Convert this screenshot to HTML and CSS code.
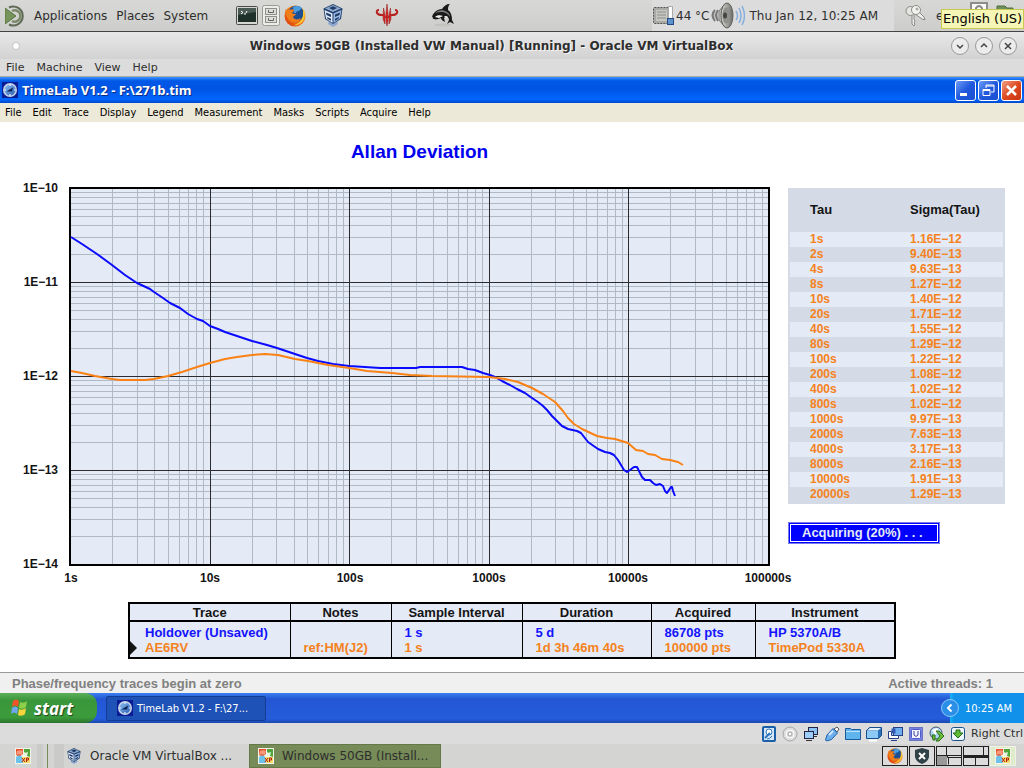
FILE: index.html
```html
<!DOCTYPE html>
<html lang="en">
<head>
    <meta charset="UTF-8">
    <meta name="viewport" content="width=device-width, initial-scale=1.0">
    <title>TimeLab V1.2</title>
    <link rel="stylesheet" href="styles.css">
</head>
<body>
    <!-- shared icons -->
    <svg class="defs" width="0" height="0" aria-hidden="true">
        <linearGradient id="xp-blue" x1="0" y1="0" x2="1" y2="1">
            <stop offset="0" stop-color="#8fc0f4"/><stop offset="1" stop-color="#2a5eb4"/>
        </linearGradient>
        <linearGradient id="fox-fire" x1="0" y1="1" x2="1" y2="0">
            <stop offset="0" stop-color="#d9380c"/><stop offset="0.6" stop-color="#f0801a"/><stop offset="1" stop-color="#fcd040"/>
        </linearGradient>
        <linearGradient id="metal" x1="0" y1="0" x2="1" y2="0">
            <stop offset="0" stop-color="#d8d8d4"/><stop offset="1" stop-color="#6c6c68"/>
        </linearGradient>
        <symbol id="i-firefox" viewBox="0 0 22 22">
            <circle cx="11" cy="11" r="10.5" fill="url(#fox-fire)"/>
            <circle cx="12" cy="8.5" r="7.8" fill="#1d4f94"/>
            <path d="M9 2c3-2 7-1 9 1-2 1-2 3-4 3s-1 3-4 2z" fill="#4c9ce0"/>
            <path d="M1.500 4c1 1 2 1 4 1 2-1 3-1 5 0L8 8c1 1 3 1 4 1-1 2-3 2-3 3 1 3 5 3 8 1-2 5-9 6-12 2C2 12 1 8 1.500 4z" fill="#ef7d18"/>
            <path d="M19 4c2 3 2 7 1 10-2 5-7 7-10 6 5-1 9-6 9-10z" fill="#fac837"/>
        </symbol>
        <symbol id="i-vbox" viewBox="0 0 20 23">
            <path d="M6 17h8l1 3-5 3-5-3z" fill="#8fa8cf"/>
            <path d="M10 0l9.500 4.500L18 15l-8 5L2 15 .5 4.500z" fill="#21406e"/>
            <path d="M10 1l8 3.500L10 8 2 4.500z" fill="#8fa9cc"/>
            <path d="M1.500 6L9.500 9.500V19L3 14.500z" fill="#dfe9f7"/>
            <path d="M18.500 6l-8 3.500V19l6.500-4.500z" fill="#9cb8e0"/>
            <path d="M3 8.500l5 2v2.500L3.500 11zM4 13l4 1.800v2L4.500 14.800zM17 8.500l-5 2v2.500l4.500-2zM16 13l-4 1.800v2l3.500-2zM6 4l4-1.800L14 4l-4 2z" fill="#1e3b68"/>
        </symbol>
        <symbol id="i-clock" viewBox="0 0 16 16">
            <rect width="16" height="16" fill="#0a1c94"/>
            <circle cx="8" cy="8" r="7" fill="#c7d5e6"/>
            <circle cx="8" cy="8" r="5.500" fill="url(#xp-blue)"/>
            <path d="M4.500 9.500l6.500-4-1 4z" fill="#0c2350"/>
            <path d="M8 2v2M2.500 8h1.500M12 8h1.500M8 12v2" stroke="#fff"/>
        </symbol>
        <symbol id="i-xp" viewBox="0 0 16 16">
            <rect width="16" height="16" fill="#f4f4ea"/>
            <path d="M1 1h7v5c-2 2-2 1-3 3L1 7z" fill="#e8502a"/>
            <path d="M2 3c2-1 4-1 6 0l-1 4c-2-1-4-1-6 0z" fill="#f59a7c"/>
            <path d="M9 1h6v8l-6-2z" fill="#4fa53a"/>
            <path d="M9 4c1 1 2 1 4 0l-1 4H9z" fill="#e9f6e0"/>
            <path d="M1 9c2-2 5-2 6 0l1 6H1z" fill="#6cc2ea"/>
            <path d="M7 9h8v6H8z" fill="#f6da6a"/>
            <path d="M7 10l3 4M10 10l-3 4M11.500 14v-4h2v2h-2" stroke="#b02010" fill="none"/>
        </symbol>
    </svg>

    <header class="panel panel-top">
        <nav class="panel-menu" aria-label="Desktop">
            <svg class="mate" width="20" height="22" viewBox="0 0 20 22" aria-hidden="true">
                <path d="M0 3l11 8L0 19z" fill="#76935a" stroke="#5a7542"/>
                <path d="M4 2.500A9.500 9.500 0 1 1 4 19.500" fill="none" stroke="#5f6a55" stroke-width="2"/>
                <path d="M7 6a5.700 5.700 0 1 1 0 10" fill="none" stroke="#7a8a6a" stroke-width="2.500"/>
            </svg>
            <a href="#">Applications</a>
            <a href="#">Places</a>
            <a href="#">System</a>
        </nav>
        <div class="launchers">
            <button type="button" aria-label="Terminal"><svg width="22" height="20" viewBox="0 0 22 20">
                <rect x=".5" y=".5" width="21" height="18" rx="1" fill="#d6d6d2" stroke="#4a4a48"/>
                <rect x="2" y="2" width="18" height="14" fill="#20302b"/>
                <path d="M2 9l18-3V2H2z" fill="#4a5a54"/>
                <path d="M5 5l2 1.500L5 8M8 8h2M11 5l-1 2" stroke="#fff" fill="none"/>
            </svg></button>
            <button type="button" aria-label="Files"><svg width="18" height="21" viewBox="0 0 18 21">
                <rect x=".5" y=".5" width="17" height="20" rx="2" fill="#ecece8" stroke="#9a9a96"/>
                <rect x="3.500" y="3.500" width="11" height="6" fill="#dcdcd8" stroke="#8f8f8b"/>
                <rect x="3.500" y="11.500" width="11" height="6" fill="#dcdcd8" stroke="#8f8f8b"/>
                <path d="M6.500 5v2.500h5V5M6.500 13v2.500h5V13" fill="none" stroke="#666"/>
            </svg></button>
            <button type="button" aria-label="Firefox"><svg width="22" height="22"><use href="#i-firefox"/></svg></button>
        </div>
        <div class="launchers launchers-wide">
            <button type="button" aria-label="VirtualBox"><svg width="20" height="23"><use href="#i-vbox"/></svg></button>
            <button type="button" aria-label="Quake"><svg width="24" height="23" viewBox="0 0 24 23">
                <path d="M4 6Q1 6 2 9q1 2 5 2 3 0 3 3M20 6q3 0 2 3-1 2-5 2-3 0-3 3" fill="none" stroke="#b82020" stroke-width="2"/>
                <path d="M12 0l1 9v8l-1 5-1-5V9zM8.500 4L10 11v9l-2-5zM15.500 4L14 11v9l2-5z" fill="#e02c2c" stroke="#8e1414" stroke-width=".5"/>
            </svg></button>
            <button type="button" aria-label="Dolphin"><svg width="24" height="23" viewBox="0 0 24 23">
                <ellipse cx="12" cy="21" rx="9" ry="1.500" fill="#c2c2be"/>
                <path d="M1 13C2 9 6 5 11 5c2-3 4-5 8-5-2 2-2 4-2 6 3 2 4 6 4 10l2 4-4-2-3 2 2-4c0-2-1-3-3-4l-2 2 1 4c-3-1-4-3-4-4-3 1-5 2-7 1-1 0-2-1-1-2z" fill="#1a1a1a"/>
                <path d="M4 13c2-2 5-2 8-1l-4 2z" fill="#f2f2f2"/>
                <path d="M13 12l3 0 1 2-2 0z" fill="#e2e2e2"/>
                <path d="M4 9c3-3 8-4 12-1 2 1 3 3 3 5-3-5-8-6-15-4z" fill="#7d7d7d"/>
            </svg></button>
        </div>
        <div class="applets">
            <svg width="22" height="20" viewBox="0 0 22 20" aria-hidden="true">
                <rect x="1.500" y="1.500" width="17" height="16" rx="1" fill="#a9a9a5" stroke="#545450" stroke-dasharray="2 1"/>
                <rect x="4" y="4" width="11" height="11" fill="#c6c6c2"/>
                <path d="M5 6h9M5 9h9M5 12h9" stroke="#8c8c88"/>
                <rect x="16.500" y=".5" width="4" height="13" fill="#fff" stroke="#aaa"/>
                <rect x="15.500" y="12.500" width="6" height="6" fill="#5c93cf" stroke="#234a84"/>
            </svg>
            <span>44 °C</span>
            <svg class="speaker" width="34" height="27" viewBox="0 0 34 27" aria-hidden="true">
                <path d="M4 8q-5 5 0 11M7 8q-4 5 0 11" fill="#bbb" stroke="#777" stroke-width="2"/>
                <path d="M8 9l6-7v23l-6-7z" fill="url(#metal)" stroke="#777"/>
                <ellipse cx="16" cy="13.500" rx="6" ry="12.500" fill="url(#metal)" stroke="#5f5f5b"/>
                <ellipse cx="15" cy="13.500" rx="3.500" ry="8" fill="#8f8f8b"/>
                <ellipse cx="14" cy="13.500" rx="2" ry="3" fill="#454541"/>
                <path d="M25 9q3 5 0 9M28 6q4 8 0 15M31 4q5 10 0 19" fill="none" stroke="#86aede" stroke-width="1.500"/>
            </svg>
            <time>Thu Jan 12, 10:25 AM</time>
        </div>
        <div class="indicators">
            <svg width="24" height="22" viewBox="0 0 24 22" aria-hidden="true">
                <path d="M8 9v10l2 2 1-2-1-1 1-2-1-2V9" fill="#eee" stroke="#8a8a86"/>
                <path d="M11 9l7 5 3 1-1-3-5-5" fill="#eee" stroke="#8a8a86"/>
                <circle cx="6.500" cy="6" r="4.500" fill="#e4e4e0" stroke="#8a8a86"/>
                <circle cx="12" cy="5" r="4.500" fill="#f2f2ee" stroke="#8a8a86"/>
                <circle cx="13" cy="4" r="1.500" fill="#aaa"/>
            </svg>
            <span class="lang">e</span>
            <svg width="18" height="28" viewBox="0 0 18 28" aria-hidden="true">
                <rect x="1" y="1" width="16" height="22" fill="#fafafa" stroke="#8d8d89" stroke-width="2"/>
                <path d="M6 10V6q3-4 6 0v4" fill="none" stroke="#888" stroke-width="2"/>
            </svg>
            <svg width="18" height="22" viewBox="0 0 18 22" aria-hidden="true">
                <path d="M1 19V1h8l2 2h6v16z" fill="#6f8f5e" stroke="#4f6c40"/>
            </svg>
            <div class="tooltip" role="tooltip">English (US)</div>
        </div>
    </header>

    <div class="vm-title">
        <i class="dot"></i>
        <h2>Windows 50GB (Installed VW Manual) [Running] - Oracle VM VirtualBox</h2>
        <div class="vm-buttons">
            <button type="button" aria-label="Minimize"><svg width="8" height="8" viewBox="0 0 8 8"><path d="M1 3l3 3 3-3"/></svg></button>
            <button type="button" aria-label="Maximize"><svg width="8" height="8" viewBox="0 0 8 8"><path d="M1 5l3-3 3 3"/></svg></button>
            <button type="button" aria-label="Close"><svg width="8" height="8" viewBox="0 0 8 8"><path d="M1 1l6 6M7 1L1 7"/></svg></button>
        </div>
    </div>
    <nav class="vm-menu" aria-label="Machine">
        <a href="#">File</a><a href="#">Machine</a><a href="#">View</a><a href="#">Help</a>
    </nav>

    <div class="xp-title">
        <svg width="16" height="16" aria-hidden="true"><use href="#i-clock"/></svg>
        <h2>TimeLab V1.2 - F:\271b.tim</h2>
        <div class="xp-buttons">
            <button type="button" aria-label="Minimize"><svg width="17" height="17" viewBox="0 0 17 17"><path d="M3 11h7v3H3z" fill="#fff"/></svg></button>
            <button type="button" aria-label="Restore"><svg width="17" height="17" viewBox="0 0 17 17"><path d="M6 6V3h8v7h-3M6 4h8M3 7.500h7v6H3zM3 8.500h7" fill="none" stroke="#fff"/></svg></button>
            <button type="button" class="close" aria-label="Close"><svg width="17" height="17" viewBox="0 0 17 17"><path d="M4 4l9 9M13 4l-9 9" stroke="#fff" stroke-width="2.500"/></svg></button>
        </div>
    </div>
    <nav class="xp-menu" aria-label="TimeLab">
        <a href="#">File</a><a href="#">Edit</a><a href="#">Trace</a><a href="#">Display</a><a href="#">Legend</a><a href="#">Measurement</a><a href="#">Masks</a><a href="#">Scripts</a><a href="#">Acquire</a><a href="#">Help</a>
    </nav>

    <main>
        <div class="workspace">
            <section class="chart">
                <h1>Allan Deviation</h1>
                <svg id="plot" viewBox="0 180 788 410" role="img" aria-label="Allan deviation against tau">
                    <rect x="70" y="188" width="699" height="377" fill="#e4eaf6"/>
                    <g id="grid" shape-rendering="crispEdges"></g>
                    <rect x="70" y="188" width="699" height="377" fill="none" stroke="#000" stroke-width="2"/>
                    <polyline class="trace blue-line" points="71,237 82,244 97,254 112,265 125,275 137,283 150,289 154,292 163,298 170,303 180,308 188,314 197,319 203,321 210,326 218,329 225,332 237,336 252,341 267,345 277,348 295,354 307,358 318,361 333,364 349,366 365,367 380,368 416,368 420,367 462,367 468,369 475,370 483,373 490,375 495,377 502,381 510,385 517,389 525,393 532,398 538,402 543,406 547,410 552,416 562,426 568,429 577,431 581,433 588,442 598,449 605,452 610,453 614,455 618,460 624,470 627,472 630,470 634,467 637,467 639,471 642,477 645,480 650,480 653,483 656,485 660,484 663,486 665,491 667,493 669,490 671,487 672,487 673,491 675,496"/>
                    <polyline class="trace orange-line" points="71,371 82,373 95,376 112,379 120,380 145,380 154,379 168,376 182,372 197,367 210,363 225,359 237,357 252,355 265,354 278,355 295,359 308,361 328,365 349,368 367,371 392,373 410,375 432,376 489,377 505,379 518,382 532,388 543,394 555,402 563,411 568,418 574,424 582,429 597,436 607,438 615,439 628,443 636,450 643,451 648,454 655,455 662,459 670,460 678,462 683,465"/>
                    <g class="axis-y">
                        <text x="58" y="192">1E−10</text>
                        <text x="58" y="286">1E−11</text>
                        <text x="58" y="380">1E−12</text>
                        <text x="58" y="474">1E−13</text>
                        <text x="58" y="568">1E−14</text>
                    </g>
                    <g class="axis-x">
                        <text x="71" y="582">1s</text>
                        <text x="210" y="582">10s</text>
                        <text x="350" y="582">100s</text>
                        <text x="489" y="582">1000s</text>
                        <text x="628" y="582">10000s</text>
                        <text x="768" y="582">100000s</text>
                    </g>
                </svg>
            </section>

            <aside class="results">
                <table class="sigma">
                    <thead><tr><th scope="col">Tau</th><th scope="col">Sigma(Tau)</th></tr></thead>
                    <tbody>
                        <tr><td>1s</td><td>1.16E−12</td></tr>
                        <tr><td>2s</td><td>9.40E−13</td></tr>
                        <tr><td>4s</td><td>9.63E−13</td></tr>
                        <tr><td>8s</td><td>1.27E−12</td></tr>
                        <tr><td>10s</td><td>1.40E−12</td></tr>
                        <tr><td>20s</td><td>1.71E−12</td></tr>
                        <tr><td>40s</td><td>1.55E−12</td></tr>
                        <tr><td>80s</td><td>1.29E−12</td></tr>
                        <tr><td>100s</td><td>1.22E−12</td></tr>
                        <tr><td>200s</td><td>1.08E−12</td></tr>
                        <tr><td>400s</td><td>1.02E−12</td></tr>
                        <tr><td>800s</td><td>1.02E−12</td></tr>
                        <tr><td>1000s</td><td>9.97E−13</td></tr>
                        <tr><td>2000s</td><td>7.63E−13</td></tr>
                        <tr><td>4000s</td><td>3.17E−13</td></tr>
                        <tr><td>8000s</td><td>2.16E−13</td></tr>
                        <tr><td>10000s</td><td>1.91E−13</td></tr>
                        <tr><td>20000s</td><td>1.29E−13</td></tr>
                    </tbody>
                </table>
                <div class="acquiring" role="status">Acquiring (20%) . . .</div>
            </aside>
        </div>

        <table class="traces">
            <colgroup><col class="c-trace"><col class="c-notes"><col class="c-interval"><col class="c-duration"><col class="c-acquired"><col></colgroup>
            <thead>
                <tr><th scope="col">Trace</th><th scope="col">Notes</th><th scope="col">Sample Interval</th><th scope="col">Duration</th><th scope="col">Acquired</th><th scope="col">Instrument</th></tr>
            </thead>
            <tbody>
                <tr class="blue"><td>Holdover (Unsaved)</td><td></td><td>1 s</td><td>5 d</td><td>86708 pts</td><td>HP 5370A/B</td></tr>
                <tr class="orange selected"><td>AE6RV</td><td>ref:HM(J2)</td><td>1 s</td><td>1d 3h 46m 40s</td><td>100000 pts</td><td>TimePod 5330A</td></tr>
            </tbody>
        </table>
    </main>

    <div class="statusbar">
        <span>Phase/frequency traces begin at zero</span>
        <span>Active threads: 1</span>
    </div>

    <div class="taskbar">
        <button type="button" class="start">
            <svg width="20" height="18" viewBox="0 0 20 18" aria-hidden="true">
                <path d="M3 2c2-2 4-2 6 0L8 8C6 6 4 6 2 8z" fill="#f0552a"/>
                <path d="M10 3c2 1 5 1 7-1l-1 6c-2 2-5 2-7 1z" fill="#8fd04a"/>
                <path d="M2 9c2-2 4-2 6 0l-1 6c-2-2-4-2-6 0z" fill="#6ea6f4"/>
                <path d="M9 10c2 1 4 1 7-1l-1 6c-2 2-5 2-7 1z" fill="#fcd53c"/>
            </svg>
            start
        </button>
        <button type="button" class="task">
            <svg width="16" height="16" aria-hidden="true"><use href="#i-clock"/></svg>
            TimeLab V1.2 - F:\27...
        </button>
        <div class="tray">
            <button type="button" aria-label="Show hidden icons"><svg width="18" height="18" viewBox="0 0 18 18">
                <circle cx="9" cy="9" r="8.500" fill="#2b8fe8" stroke="#8ccbf8"/>
                <path d="M10.500 5.500L7 9l3.500 3.500" fill="none" stroke="#fff" stroke-width="2"/>
            </svg></button>
            <time>10:25 AM</time>
        </div>
    </div>

    <div class="vm-status">
        <svg width="16" height="16" viewBox="0 0 16 16" aria-hidden="true"><rect x="2" y="1" width="12" height="14" rx="1" fill="#d5e8fa" stroke="#1b5fa8" stroke-width="2"/><circle cx="8" cy="6" r="3" fill="#fff" stroke="#2d74bd"/><path d="M4 12l5-5" stroke="#2d74bd" stroke-width="2"/><path d="M6 13q3 0 5-3" stroke="#2d74bd" fill="none"/></svg>
        <svg width="16" height="16" viewBox="0 0 16 16" aria-hidden="true"><circle cx="8" cy="8" r="7" fill="#dedede" stroke="#a6a6a6"/><circle cx="8" cy="8" r="4" fill="none" stroke="#fff"/><circle cx="8" cy="8" r="2" fill="#fff" stroke="#a0a0a0"/></svg>
        <svg width="16" height="16" viewBox="0 0 16 16" aria-hidden="true"><rect x="5.500" y="1.500" width="9" height="7" fill="#8dc3f2" stroke="#224"/><path d="M9 10.500h5" stroke="#333"/><rect x="1.500" y="5.500" width="9" height="7" fill="#9dcdf6" stroke="#224"/><path d="M3 14.500h6" stroke="#333"/></svg>
        <svg width="16" height="16" viewBox="0 0 16 16" aria-hidden="true"><path d="M10 3l3-2 2 2-2 3z" fill="#f5f5f5" stroke="#555"/><path d="M9 2.500l4.500 4.500-6 6.500-5 1.500-1-1L3 9z" fill="#6db0ef" stroke="#1b5fa8"/><path d="M5 9l4-4" stroke="#d5ebff" stroke-width="2"/></svg>
        <svg width="16" height="16" viewBox="0 0 16 16" aria-hidden="true"><path d="M.5 13.500v-11h5l1 1h9v10z" fill="#5fb4ee" stroke="#185a9c"/><path d="M1 5.500h14" stroke="#bfe2fa"/></svg>
        <svg width="16" height="16" viewBox="0 0 16 16" aria-hidden="true"><path d="M.5 4.500l3-3h12v8l-3 3H.5z" fill="#2d70ba" stroke="#174e8a"/><path d="M1 4.500l3-2.500h11l-3 2.500z" fill="#e6f2fc"/><rect x="1" y="5" width="11" height="7" fill="#8dc9f7"/><path d="M3 14.500h8" stroke="#fff" stroke-width="2"/></svg>
        <svg width="16" height="16" viewBox="0 0 16 16" aria-hidden="true"><rect x="6.500" y="1.500" width="9" height="8" fill="#6eaef0" stroke="#253e88"/><path d="M1.500 5.500h3v4h7v3h-10zM4 14.500h6" fill="#fff" stroke="#253e88"/><rect x="4.500" y="2.500" width="4" height="5" fill="#345ab0"/></svg>
        <svg width="16" height="16" viewBox="0 0 16 16" aria-hidden="true"><rect x="1.500" y="1.500" width="13" height="13" fill="#7582e0" stroke="#2b35a8" stroke-dasharray="1 1"/><rect x="3.500" y="3.500" width="9" height="9" rx="1" fill="#f3f4ff" stroke="#4d58c4"/><path d="M6 5v4q2 3 4 0V5" fill="none" stroke="#39409c"/></svg>
        <svg width="16" height="16" viewBox="0 0 16 16" aria-hidden="true"><circle cx="7" cy="7" r="6" fill="#a9d4f4" stroke="#456"/><path d="M3 4l5-2 2 3-4 4z" fill="#fff"/><path d="M7 5h3l5 5-5 5H7l4-5z" fill="#6cbf3c" stroke="#2b6d1b"/><path d="M3 9h3v5H4z" fill="#6cbf3c" stroke="#2b6d1b"/></svg>
        <svg width="16" height="16" viewBox="0 0 16 16" aria-hidden="true"><rect x="1.500" y="1.500" width="13" height="13" rx="2" fill="#eef6ff" stroke="#1d4f86"/><path d="M6 4h4v3h3l-5 5-5-5h3z" fill="#62bb35" stroke="#256c16"/></svg>
        <span>Right Ctrl</span>
    </div>

    <footer class="panel panel-bottom">
        <button type="button" class="show-desktop" aria-label="Windows XP"><svg width="16" height="16"><use href="#i-xp"/></svg></button>
        <i class="handle"></i>
        <button type="button" class="window-task"><svg width="16" height="16"><use href="#i-vbox"/></svg>Oracle VM VirtualBox ...</button>
        <button type="button" class="window-task active"><svg width="16" height="16"><use href="#i-xp"/></svg>Windows 50GB (Install...</button>
        <div class="pager">
            <button type="button" aria-label="Workspace 1"><svg width="16" height="16"><use href="#i-firefox"/></svg></button>
            <button type="button" aria-label="Workspace 2"><svg width="16" height="16" viewBox="0 0 16 16"><path d="M1 2l7-2 7 2v7q-1 5-7 7-6-2-7-7z" fill="#2f4247"/><path d="M5 5l6 6M11 5l-6 6" stroke="#fff" stroke-width="2"/></svg></button>
            <button type="button" aria-label="Workspace 3"><svg width="24" height="18" viewBox="0 0 24 18"><path d="M0 9h10v9H0z" fill="#999"/><path d="M0 8.500h24M9.500 0v8M10.500 8v2.500H24M11.500 17.500V11" fill="none" stroke="#222"/></svg></button>
            <button type="button" aria-label="Workspace 4"><svg width="24" height="18" viewBox="0 0 24 18"><path d="M0 9h24" stroke="#222" stroke-width="2"/><path d="M19.500 0v8M11.500 9v9M0 10.500h11M11 10.500h13" fill="none" stroke="#222"/></svg></button>
            <button type="button" class="current" aria-label="Workspace 5"><svg width="16" height="16"><use href="#i-xp"/></svg></button>
        </div>
    </footer>

    <script src="script.js"></script>
</body>
</html>
```
FILE: styles.css
```css
* {
    box-sizing: border-box;
}
body {
    margin: 0;
    min-height: 100vh;
    display: flex;
    flex-direction: column;
    background-color: #fff;
    font-family: "DejaVu Sans", sans-serif;
    font-size: 12px;
    color: #2e2e2e;
}
a {
    color: inherit;
    text-decoration: none;
}
button {
    padding: 0;
    border: none;
    background: none;
    font: inherit;
    color: inherit;
    cursor: pointer;
}
svg {
    display: block;
    flex: none;
}
h1, h2 {
    margin: 0;
}
.defs {
    position: absolute;
}

/* desktop panels */
.panel {
    display: flex;
    align-items: center;
    background: linear-gradient(#d8d9d6, #cdcecb);
}
.panel-top {
    height: 32px;
    padding-left: 5px;
    border-bottom: 1px solid #444;
    white-space: nowrap;
}
.panel-menu {
    display: flex;
    align-items: center;
    gap: 9px;
    width: 231px;
}
.launchers {
    display: flex;
    align-items: center;
    gap: 4px;
}
.launchers-wide {
    margin-left: 17px;
    gap: 32px;
}
.applets {
    display: flex;
    align-items: center;
    align-self: stretch;
    gap: 2px;
    width: 242px;
    margin-left: auto;
    background-color: #dcdcdc;
}
.applets time {
    margin-left: 2px;
}
.indicators {
    position: relative;
    display: flex;
    align-items: center;
    gap: 8px;
    width: 130px;
    padding-left: 10px;
}
.lang {
    width: 26px;
}
.tooltip {
    position: absolute;
    right: 0;
    top: 7px;
    padding: 0 1px;
    line-height: 18px;
    border: 1px solid #c8c84e;
    background-color: #f5f5b5;
    color: #000;
    font-size: 13px;
}

/* virtual machine window */
.vm-title {
    display: flex;
    align-items: center;
    justify-content: space-between;
    height: 27px;
    padding: 0 7px 0 12px;
    background: linear-gradient(#e8e8e8, #d2d2d2);
}
.vm-title h2 {
    font-size: 12px;
    margin-left: 12px;
    text-shadow: 1px 1px #f6f6f6;
}
.dot {
    width: 8px;
    height: 8px;
    border: 1px solid #c4c4c4;
    border-radius: 50%;
    background-color: #fff;
}
.vm-buttons {
    display: flex;
    gap: 6px;
}
.vm-buttons button {
    display: grid;
    place-items: center;
    width: 18px;
    height: 18px;
    border: 1px solid #999;
    border-radius: 50%;
    background-color: #ececec;
}
.vm-buttons path {
    fill: none;
    stroke: #444;
    stroke-width: 1.5;
}
.vm-menu {
    display: flex;
    gap: 12px;
    height: 18px;
    padding-left: 6px;
    border-bottom: 1px solid #aaa;
    background-color: #dcdcdc;
    font-size: 11px;
    line-height: 17px;
}

/* guest window */
.xp-title {
    display: flex;
    align-items: center;
    gap: 4px;
    height: 26px;
    padding: 0 2px;
    background: linear-gradient(#3c95ff, #0058e6 15%, #0054e3 45%, #0066ff 85%, #0048cf);
    color: #fff;
    font-family: "Open Sans", sans-serif;
}
.xp-title h2 {
    flex: 1;
    font-size: 13px;
    text-shadow: 1px 1px #0c2e88;
}
.xp-buttons {
    display: flex;
    gap: 2px;
}
.xp-buttons button {
    display: grid;
    place-items: center;
    width: 21px;
    height: 21px;
    border: 1px solid #fff;
    border-radius: 3px;
    background: linear-gradient(135deg, #6d9cf8, #2158dc 50%, #1a4fd0);
}
.xp-buttons .close {
    background: linear-gradient(135deg, #f0a088, #dd4a22 50%, #c83410);
}
.xp-menu {
    display: flex;
    gap: 11px;
    height: 19px;
    padding-left: 5px;
    background-color: #ece9d8;
    color: #000;
    font-family: "DejaVu Sans Condensed", "Noto Sans", sans-serif;
    font-size: 11px;
    line-height: 19px;
}

main {
    flex: 1;
    background-color: #fff;
    color: #141414;
    font-family: "Liberation Sans", Arial, sans-serif;
    font-size: 13px;
    font-weight: bold;
}
.workspace {
    display: grid;
    grid-template-columns: 1fr 217px;
    padding-right: 19px;
}
.chart h1 {
    padding: 19px 0 17px 51px;
    font-size: 19px;
    line-height: 22px;
    text-align: center;
    color: #0000f0;
}
.chart svg {
    width: 100%;
    height: auto;
    overflow: visible;
}
.chart text {
    font-size: 12px;
    fill: #141414;
}
.axis-y {
    text-anchor: end;
}
.axis-x {
    text-anchor: middle;
}
.minor {
    fill: #b0bac6;
}
.major {
    fill: #2c2c30;
}
.trace {
    fill: none;
    stroke-width: 2;
    stroke-linejoin: round;
}
.blue-line {
    stroke: #0a0aff;
}
.orange-line {
    stroke: #fa8214;
}
.results {
    padding-top: 66px;
}
.sigma {
    width: 100%;
    border: 2px solid #d5dbe6;
    border-top: none;
    border-collapse: separate;
    border-spacing: 0;
    background-color: #d5dbe6;
}
.sigma th {
    height: 44px;
    padding: 0 0 2px 20px;
    text-align: left;
}
.sigma th:first-child {
    width: 100px;
}
.sigma td {
    height: 15px;
    padding: 0 0 0 20px;
    font-size: 12px;
    line-height: 15px;
    color: #f58220;
}
.sigma tbody tr:nth-child(odd) {
    background-color: #e4eaf6;
}
.acquiring {
    width: fit-content;
    margin-top: 18px;
    padding: 0 16px 0 13px;
    border: 1px solid #7a7af0;
    background-color: #0000ff;
    box-shadow: inset 0 0 0 1px #0000ff, inset 0 0 0 2px #fff;
    color: #e4eaf6;
    line-height: 20px;
}

.traces {
    width: 75%;
    margin: 12px 0 13px 12.5%;
    table-layout: fixed;
    border: 2px solid #000;
    border-collapse: collapse;
    background-color: #e4eaf6;
    line-height: 15px;
}
.traces th, .traces td {
    padding: 0 0 0 13px;
    border-left: 1px solid #000;
    white-space: nowrap;
}
.traces th {
    padding: 1px 0 0;
    border-bottom: 2px solid #000;
}
.traces td:first-child {
    position: relative;
    padding-left: 15px;
}
.traces .blue td {
    padding-top: 3px;
    color: #1414ff;
}
.traces .orange td {
    padding-bottom: 2px;
    color: #f58220;
}
.selected td:first-child::before {
    content: "";
    position: absolute;
    left: 0;
    top: 1px;
    border: 7px solid transparent;
    border-left-color: #141414;
    border-right: none;
}
.c-trace { width: 161px; }
.c-notes { width: 101px; }
.c-interval { width: 131px; }
.c-duration { width: 129px; }
.c-acquired { width: 104px; }

.statusbar {
    display: flex;
    justify-content: space-between;
    height: 21px;
    padding: 0 31px 0 12px;
    border-top: 1px solid #999;
    background-color: #f0f0f0;
    color: #808080;
    font-family: "Liberation Sans", Arial, sans-serif;
    font-size: 13px;
    font-weight: bold;
    line-height: 21px;
}

/* guest taskbar */
.taskbar {
    display: flex;
    align-items: center;
    height: 30px;
    background: linear-gradient(#3a80f0, #2456d4 20%, #245ddb 85%, #1c48b0);
    color: #fff;
    font-family: "DejaVu Sans Condensed", "Noto Sans", sans-serif;
    font-size: 11px;
}
.start {
    display: flex;
    align-items: center;
    gap: 4px;
    align-self: stretch;
    width: 97px;
    padding-left: 10px;
    border-radius: 0 12px 12px 0;
    background: linear-gradient(#5cae5a, #3a963a 25%, #3c9c3c 80%, #2a742c);
    font-family: "Open Sans", sans-serif;
    font-size: 17px;
    font-weight: bold;
    font-style: italic;
    text-shadow: 1px 1px 1px #1d4a1d;
}
.task {
    display: flex;
    align-items: center;
    gap: 4px;
    width: 160px;
    height: 25px;
    margin-left: 9px;
    padding-left: 10px;
    border: 1px solid #143c94;
    border-radius: 2px;
    background-color: #1e52b7;
}
.tray {
    display: flex;
    align-items: center;
    align-self: stretch;
    gap: 6px;
    width: 83px;
    margin-left: auto;
    background: linear-gradient(90deg, transparent 9px, #12b4f4 9px, #1291ea 13px);
}

.vm-status {
    display: flex;
    align-items: center;
    justify-content: flex-end;
    gap: 5px;
    height: 21px;
    padding-right: 1px;
    background-color: #dcdcdc;
    font-size: 11px;
}

.panel-bottom {
    height: 24px;
    padding-right: 8px;
    background: #d4d5d2;
}
.show-desktop {
    margin-left: 15px;
}
.handle {
    width: 27px;
    height: 24px;
    border-left: 6px solid #cacbc8;
    border-right: 10px solid #cacbc8;
    margin-left: 6px;
    background: linear-gradient(90deg, transparent 4px, #768b57 4px, #768b57 5px, transparent 5px);
}
.window-task {
    display: flex;
    align-items: center;
    gap: 8px;
    width: 192px;
    height: 24px;
    padding-left: 8px;
    white-space: nowrap;
}
.show-desktop + .handle + .window-task {
    width: 185px;
    padding-left: 2px;
}
.window-task.active {
    border: 1px solid #647848;
    background-color: #768b57;
}
.pager {
    display: flex;
    gap: 1px;
    margin-left: auto;
}
.pager button {
    display: grid;
    place-items: center;
    width: 26px;
    height: 20px;
    border: 1px solid #222;
    background-color: #dcdcdc;
}
.pager .current {
    border-color: #eef2e4;
    background-color: #dfeccb;
}
```
FILE: script.js
```js
// log-log grid: 5 decades across, 4 decades down
const grid = document.getElementById('grid');
const left = 70, top0 = 188, right = 769, bottom = 565;
const decadeW = (right - left) / 5 - 0.2;
const decadeH = 94;

function line(x, y, w, h, cls) {
    const rect = document.createElementNS('http://www.w3.org/2000/svg', 'rect');
    rect.setAttribute('x', x);
    rect.setAttribute('y', y);
    rect.setAttribute('width', w);
    rect.setAttribute('height', h);
    rect.setAttribute('class', cls);
    grid.appendChild(rect);
}

for (let d = 0; d < 5; d++) {
    for (let n = 2; n < 10; n++) {
        line(Math.round(left + (d + Math.log10(n)) * decadeW), top0, 1, bottom - top0, 'minor');
    }
}
for (let d = 0; d < 4; d++) {
    for (let n = 2; n < 10; n++) {
        line(left, Math.round(top0 + (d + 1 - Math.log10(n)) * decadeH), right - left, 1, 'minor');
    }
}
for (let d = 1; d < 5; d++) {
    line(Math.round(left + d * decadeW), top0, 1, bottom - top0, 'major');
}
for (let d = 1; d < 4; d++) {
    line(left, top0 + d * decadeH, right - left, 1, 'major');
}
```
